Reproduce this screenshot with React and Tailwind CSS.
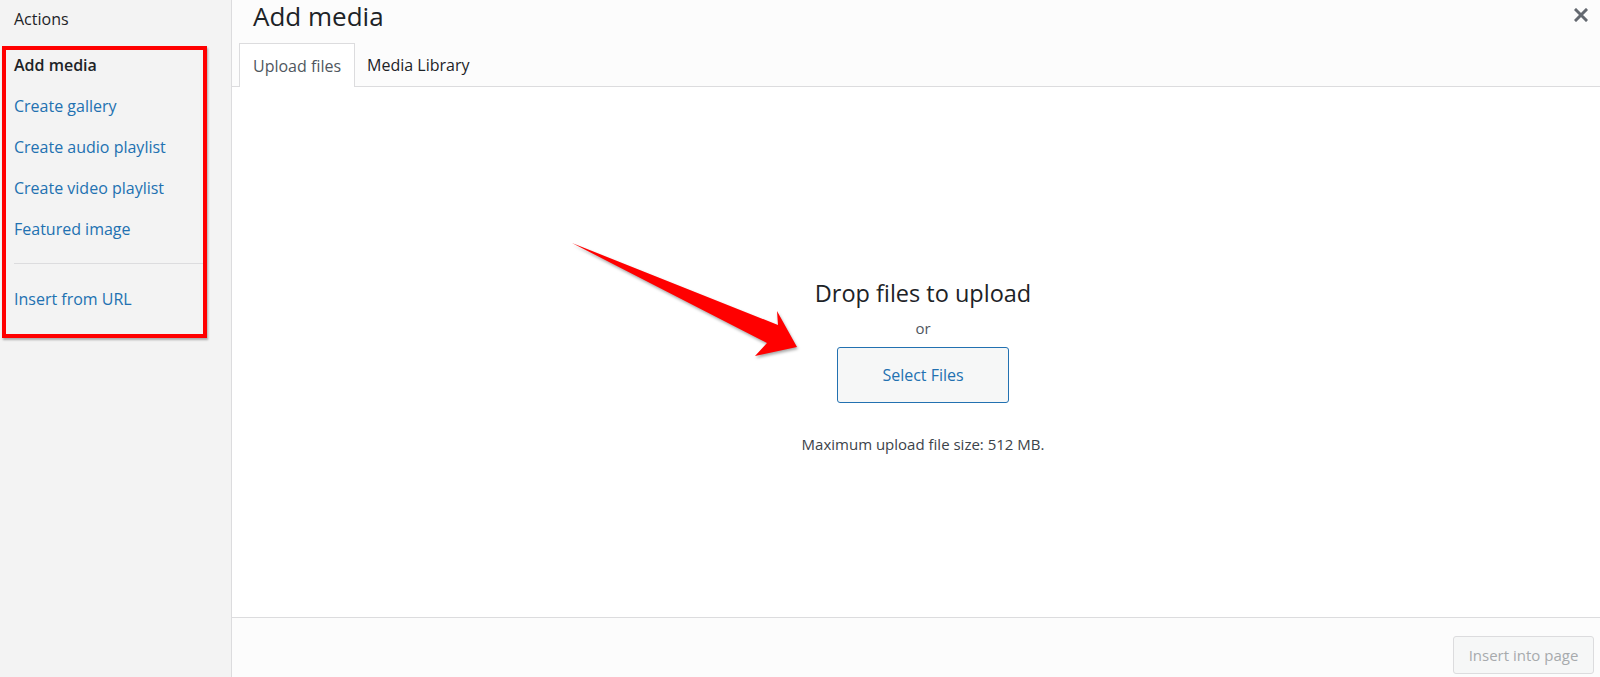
import React from 'react';

const links = ['Create gallery', 'Create audio playlist', 'Create video playlist', 'Featured image'];

function CloseIcon() {
  return (
    <svg width="14" height="14" viewBox="0 0 14 14">
      <path d="M2 2 L12 12 M12 2 L2 12" stroke="#646970" strokeWidth="3" strokeLinecap="square" />
    </svg>
  );
}

function Arrow() {
  return (
    <svg
      className="absolute left-0 top-0 pointer-events-none"
      width="1600"
      height="677"
      viewBox="0 0 1600 677"
      style={{ filter: 'drop-shadow(1px 2px 1.5px rgba(0,0,0,0.35))' }}
    >
      <polygon points="572,243 778,325 777,311 797,347 755,356 767,343" fill="#ff0000" />
    </svg>
  );
}

export default function App() {
  return (
    <div className="relative flex h-[677px] w-[1600px] overflow-hidden bg-white text-[#3c434a] font-['Open_Sans','Noto_Sans',sans-serif]">
      {/* sidebar */}
      <aside className="w-[232px] shrink-0 bg-[#f3f3f3] border-r border-[#dcdcde]">
        <div className="pl-[14px] pt-[9px] text-[16px] leading-[20px] text-[#1d2327]">Actions</div>
        <div className="mt-[17px] ml-[2px] w-[205px] border-4 border-[#ff0000] shadow-[1px_2px_2px_rgba(0,0,0,0.3)] pt-[5px] pb-[25px] pl-[8px]">
          <div className="text-[16px] leading-[20px] font-semibold text-[#1d2327]">Add media</div>
          <div className="mt-[21px] flex flex-col gap-[21px]">
            {links.map((l) => (
              <a key={l} className="text-[16px] leading-[20px] text-[#2271b1] cursor-pointer">{l}</a>
            ))}
          </div>
          <div className="mt-[24px] h-px bg-[#dcdcde]" />
          <a className="mt-[25px] block text-[16px] leading-[20px] text-[#2271b1] cursor-pointer">Insert from URL</a>
        </div>
      </aside>

      {/* main */}
      <main className="flex-1 flex flex-col min-w-0">
        <header className="relative h-[87px] bg-[#fcfcfc] border-b border-[#dcdcde] flex flex-col">
          <h1 className="pl-[21px] pt-0 text-[26px] leading-[32px] font-normal text-[#1d2327]">Add media</h1>
          <button className="absolute right-[12px] top-[8px] p-0">
            <CloseIcon />
          </button>
          <nav className="mt-auto flex pl-[7px] -mb-px">
            <div className="h-[44px] px-[13px] flex items-center bg-white border border-b-0 border-[#dcdcde] text-[16px] text-[#50575e]">
              Upload files
            </div>
            <div className="h-[44px] px-[12px] flex items-center text-[16px] text-[#1d2327]">Media Library</div>
          </nav>
        </header>

        <section className="flex-1 flex flex-col items-center pt-[191px] pl-[14px]">
          <div className="text-[23.5px] leading-[30px] text-[#1d2327]">Drop files to upload</div>
          <div className="mt-[10px] text-[15px] leading-[20px] text-[#50575e]">or</div>
          <button className="mt-[9px] w-[172px] h-[56px] rounded-[3px] border border-[#2271b1] bg-[#f6f7f7] text-[16px] text-[#2271b1]">
            Select Files
          </button>
          <div className="mt-[31px] text-[15px] leading-[20px] text-[#3c434a]">Maximum upload file size: 512 MB.</div>
        </section>

        <footer className="h-[60px] shrink-0 bg-[#fcfcfc] border-t border-[#dcdcde] flex justify-end items-start pt-[18px] pr-[6px]">
          <button className="w-[141px] h-[38px] rounded-[3px] border border-[#dcdcde] bg-[#f6f7f7] text-[15px] text-[#a7aaad]">
            Insert into page
          </button>
        </footer>
      </main>

      <Arrow />
    </div>
  );
}
